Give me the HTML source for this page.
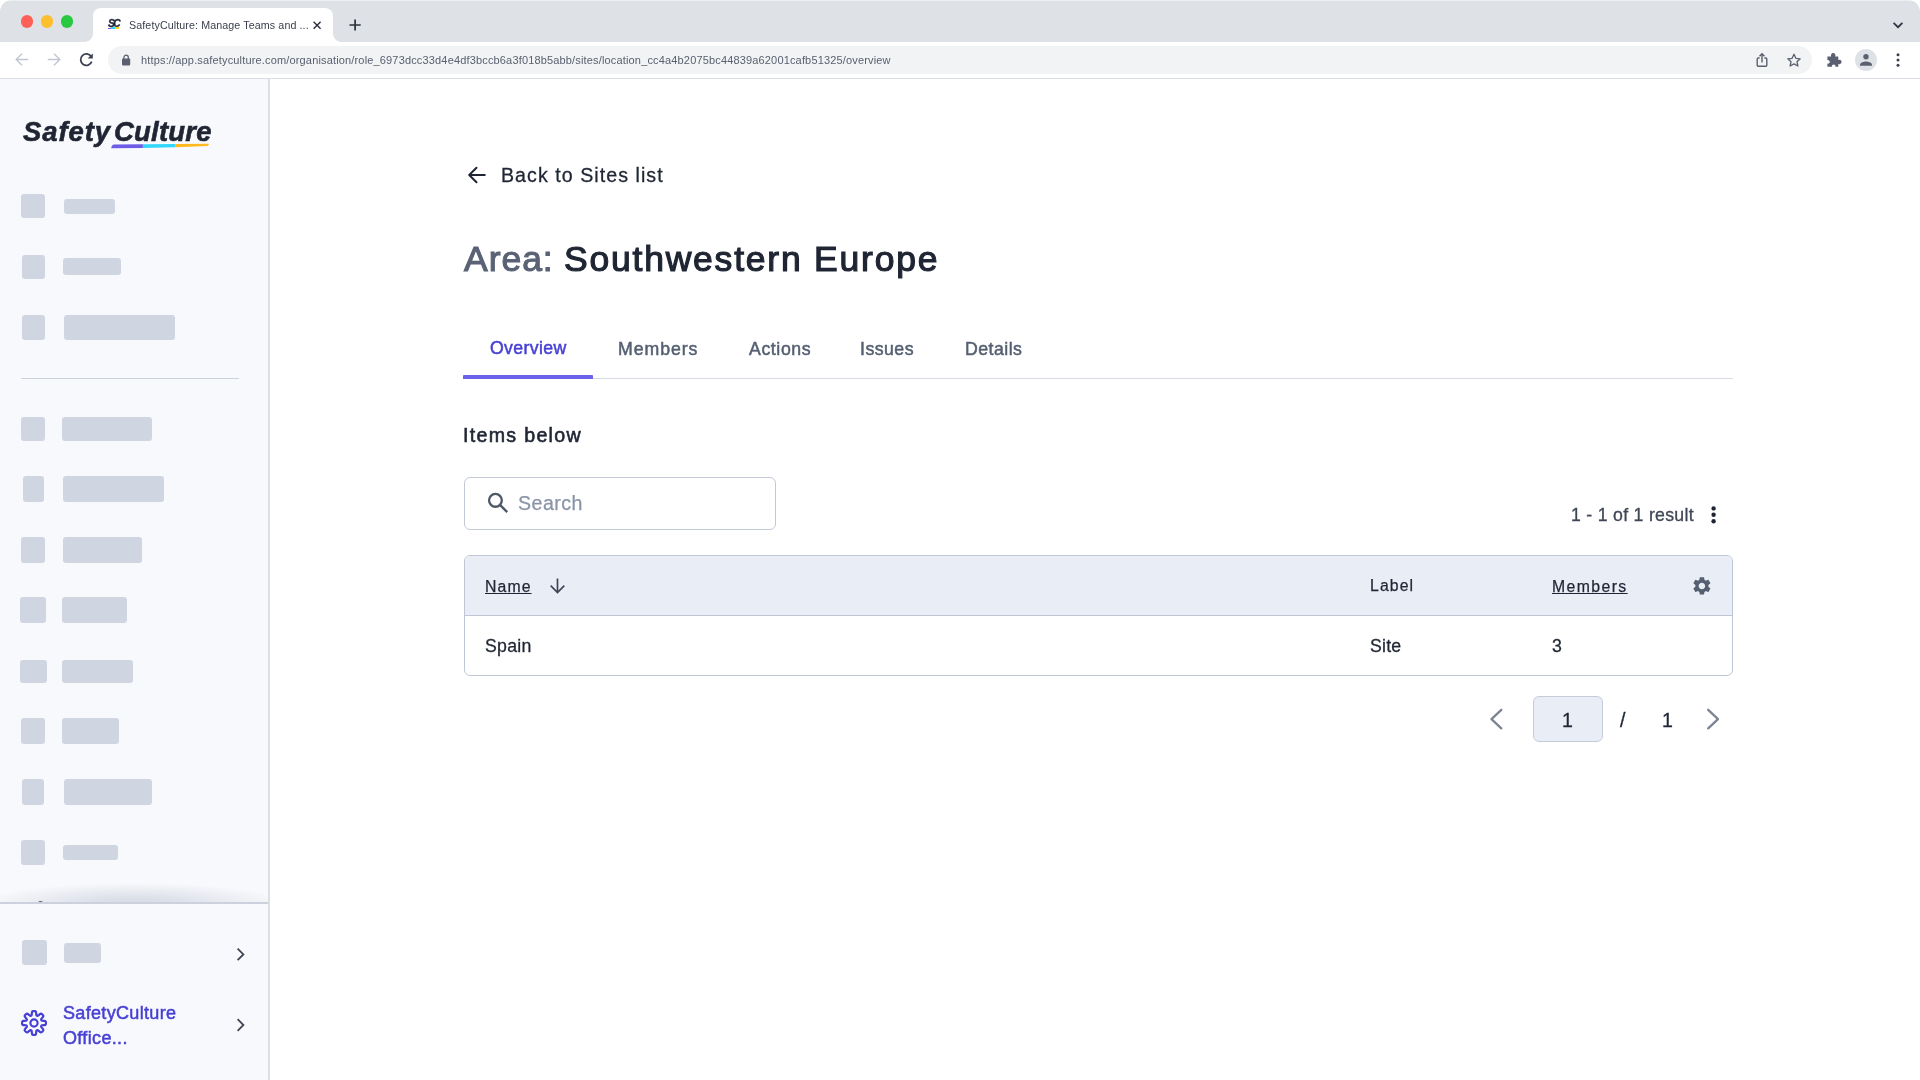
<!DOCTYPE html>
<html lang="en">
<head>
<meta charset="utf-8">
<title>SafetyCulture: Manage Teams and Sites</title>
<style>
*{box-sizing:border-box;margin:0;padding:0}
html,body{width:1920px;height:1080px;overflow:hidden;background:#fff}
body{position:relative;font-family:"Liberation Sans",sans-serif;color:#1f2533;-webkit-font-smoothing:antialiased}
.abs{position:absolute}
/* ---------- browser chrome ---------- */
#tabbar{position:absolute;left:0;top:0;width:1920px;height:42px;background:#dee1e6}
#tab{position:absolute;left:93px;top:8px;width:240px;height:34px;background:#fff;border-radius:8px 8px 0 0}
#tab:before,#tab:after{content:"";position:absolute;bottom:0;width:8px;height:8px;background:radial-gradient(circle at 0 0,rgba(255,255,255,0) 7.5px,#fff 8px)}
#tab:before{left:-8px}
#tab:after{right:-8px;background:radial-gradient(circle at 100% 0,rgba(255,255,255,0) 7.5px,#fff 8px)}
.tl{position:absolute;top:15.3px;width:12.4px;height:12.4px;border-radius:50%}
#tabtitle{position:absolute;left:128.8px;top:19.7px;font-size:10.7px;line-height:11px;color:#3a3f4d;white-space:nowrap;letter-spacing:0.1px;will-change:transform}
#toolbar{position:absolute;left:0;top:42px;width:1920px;height:36px;background:#fff}
#omni{position:absolute;left:108px;top:46px;width:1704px;height:28px;border-radius:14px;background:#f1f3f4}
#url{position:absolute;left:140.6px;top:54.8px;font-size:11px;line-height:11px;color:#5a6070;white-space:nowrap;letter-spacing:0.16px;will-change:transform}
#chromeline{position:absolute;left:0;top:78px;width:1920px;height:1px;background:#d9dce5}
/* ---------- sidebar ---------- */
#side{position:absolute;left:0;top:79px;width:270px;height:1001px;background:#f8f9fc;border-right:2px solid #dcdfe6}
.sk{position:absolute;background:#cfd6e2;border-radius:3px}
/* ---------- main ---------- */
#main{position:absolute;left:270px;top:79px;width:1650px;height:1001px;background:#fff}
.t{position:absolute;white-space:nowrap;line-height:1;will-change:transform}
</style>
</head>
<body>
<!-- ================= browser chrome ================= -->
<div id="tabbar"></div>
<div class="tl" style="left:20.800px;background:#fe5f57"></div>
<div class="tl" style="left:40.700px;background:#fdbf2d"></div>
<div class="tl" style="left:60.700px;background:#28c840"></div>
<div id="tab"></div>
<!-- favicon -->
<div class="t" id="fav" style="left:107.7px;top:18.7px;font-size:10.3px;font-weight:bold;font-style:italic;color:#1f2533;letter-spacing:-1.7px;-webkit-text-stroke:0.3px #1f2533">SC</div>
<div class="abs" style="left:108px;top:27.600px;width:3.200px;height:1.500px;background:#6c5ce7"></div>
<div class="abs" style="left:111.200px;top:27.200px;width:3.800px;height:1.900px;background:#33d6fc"></div>
<div class="abs" style="left:115px;top:27.200px;width:3.800px;height:1.700px;background:#ffd21e"></div>
<div id="tabtitle">SafetyCulture: Manage Teams and ...</div>
<svg class="abs" style="left:0;top:0" width="1920" height="79" viewBox="0 0 1920 79" fill="none">
  <!-- tab close -->
  <path d="M313.6 21.8 L320.6 28.8 M320.6 21.8 L313.6 28.8" stroke="#2b2f3a" stroke-width="1.4"/>
  <!-- new tab plus -->
  <path d="M349.5 25 H360.7 M355.1 19.4 V30.6" stroke="#2b2f3a" stroke-width="1.7"/>
  <!-- tab search chevron -->
  <path d="M1893.6 22.8 L1898 27.2 L1902.4 22.8" stroke="#2f3340" stroke-width="1.7"/>
</svg>
<div id="toolbar"></div>
<div id="omni"></div>
<div id="url">https://app.safetyculture.com/organisation/role_6973dcc33d4e4df3bccb6a3f018b5abb/sites/location_cc4a4b2075bc44839a62001cafb51325/overview</div>
<svg class="abs" style="left:0;top:42px" width="1920" height="36" viewBox="0 42 1920 36" fill="none">
  <!-- back / forward (disabled) -->
  <path d="M28.2 59.5 H16.6 M22 53.7 L16.2 59.5 L22 65.3" stroke="#c2c6d0" stroke-width="1.4"/>
  <path d="M47.8 59.5 H59.4 M54 53.7 L59.8 59.5 L54 65.3" stroke="#c2c6d0" stroke-width="1.4"/>
  <!-- reload -->
  <path d="M91.2 56.6 A5.7 5.7 0 1 0 91.7 61.6" stroke="#3c4150" stroke-width="1.8"/>
  <path d="M92.8 53.4 V58.6 H87.6 Z" fill="#3c4150"/>
  <!-- lock -->
  <rect x="122" y="58.6" width="8.2" height="6.8" rx="0.8" fill="#5a6070"/>
  <path d="M123.9 59 V57.4 A2.2 2.2 0 0 1 128.3 57.4 V59" stroke="#5a6070" stroke-width="1.3"/>
  <!-- share -->
  <path d="M1759.6 58 H1758.2 A1 1 0 0 0 1757.2 59 V65.2 A1 1 0 0 0 1758.2 66.2 H1765.8 A1 1 0 0 0 1766.8 65.2 V59 A1 1 0 0 0 1765.8 58 H1764.4" stroke="#5a6070" stroke-width="1.4"/>
  <path d="M1762 62.6 V54 M1759.5 56.2 L1762 53.7 L1764.5 56.2" stroke="#5a6070" stroke-width="1.4"/>
  <!-- star -->
  <path d="M1794 54.3 L1795.9 58.3 L1800.2 58.8 L1797 61.8 L1797.9 66 L1794 63.9 L1790.100 66 L1791 61.8 L1787.8 58.8 L1792.100 58.3 Z" stroke="#5a6070" stroke-width="1.3" stroke-linejoin="round"/>
  <!-- extensions puzzle -->
  <path d="M1827.400 56.400 H1831.200 A2.250 2.250 0 1 1 1835.200 56.400 H1838.300 V59.900 A2.250 2.250 0 1 1 1838.300 63.900 V66.800 H1835.400 A1.800 1.800 0 1 0 1832 66.800 H1827.400 V63.600 A1.800 1.800 0 1 0 1827.400 60.200 Z" fill="#5a6070"/>
  <!-- profile -->
  <circle cx="1866" cy="60" r="11" fill="#dee1e6"/>
  <circle cx="1866" cy="56.700" r="2.700" fill="#5a6070"/>
  <path d="M1860 65.800 V64.700 C1860 62.600 1864 61.500 1866 61.500 C1868 61.500 1872 62.600 1872 64.700 V65.800 Z" fill="#5a6070"/>
  <!-- menu dots -->
  <circle cx="1898" cy="54.800" r="1.500" fill="#3c4150"/><circle cx="1898" cy="60" r="1.500" fill="#3c4150"/><circle cx="1898" cy="65.200" r="1.500" fill="#3c4150"/>
</svg>
<div id="chromeline"></div>
<!-- window rounded corners -->
<div class="abs" style="left:0;top:0;width:1920px;height:1px;background:#eceef2"></div>
<div class="abs" style="left:0;top:0;width:12px;height:12px;background:radial-gradient(circle at 100% 100%,rgba(255,255,255,0) 11.500px,#fff 12.500px)"></div>
<div class="abs" style="left:1908px;top:0;width:12px;height:12px;background:radial-gradient(circle at 0 100%,rgba(255,255,255,0) 11.500px,#fff 12.500px)"></div>

<!-- ================= sidebar ================= -->
<div id="side"></div>

<!-- logo -->
<div class="t" id="logo1" style="left:22.8px;top:117.600px;font-size:27.500px;font-weight:bold;font-style:italic;color:#1f2533;letter-spacing:0.9px;-webkit-text-stroke:0.6px #1f2533">Safety</div>
<div class="t" id="logo2" style="left:113.6px;top:117.600px;font-size:27.500px;font-weight:bold;font-style:italic;color:#1f2533;letter-spacing:0.2px;-webkit-text-stroke:0.6px #1f2533">Culture</div>
<svg class="abs" style="left:108px;top:142px" width="106" height="8" viewBox="108 142 106 8">
  <path d="M113.500 144.400 L143 144.200 L142.800 147.900 L111.200 148.300 Q111.400 145 113.500 144.400Z" fill="#6c5ce7"/>
  <path d="M143 144.200 L175.300 144 L175 147.300 L142.800 147.900Z" fill="#33d6fc"/>
  <path d="M175.300 144 L209 143.800 Q208.700 145.600 207.500 146 L175 147.300Z" fill="#ffb81e"/>
</svg>
<div class="abs" style="left:21px;top:378px;width:218px;height:1px;background:#cdd3de"></div>
<div class="sk" style="left:21px;top:194px;width:24px;height:24px"></div><div class="sk" style="left:64px;top:199px;width:51px;height:15px"></div>
<div class="sk" style="left:22px;top:255px;width:23px;height:24px"></div><div class="sk" style="left:63px;top:258px;width:58px;height:17px"></div>
<div class="sk" style="left:22px;top:315px;width:23px;height:25px"></div><div class="sk" style="left:64px;top:315px;width:111px;height:25px"></div>
<div class="sk" style="left:21px;top:417px;width:24px;height:24px"></div><div class="sk" style="left:62px;top:417px;width:90px;height:24px"></div>
<div class="sk" style="left:23px;top:476px;width:21px;height:26px"></div><div class="sk" style="left:63px;top:476px;width:101px;height:26px"></div>
<div class="sk" style="left:21px;top:537px;width:24px;height:26px"></div><div class="sk" style="left:63px;top:537px;width:79px;height:26px"></div>
<div class="sk" style="left:20px;top:597px;width:26px;height:26px"></div><div class="sk" style="left:62px;top:597px;width:65px;height:26px"></div>
<div class="sk" style="left:20px;top:660px;width:27px;height:23px"></div><div class="sk" style="left:62px;top:660px;width:71px;height:23px"></div>
<div class="sk" style="left:21px;top:718px;width:24px;height:26px"></div><div class="sk" style="left:62px;top:718px;width:57px;height:26px"></div>
<div class="sk" style="left:22px;top:779px;width:22px;height:26px"></div><div class="sk" style="left:64px;top:779px;width:88px;height:26px"></div>
<div class="sk" style="left:21px;top:840px;width:24px;height:25px"></div><div class="sk" style="left:63px;top:845px;width:55px;height:15px"></div>
<div class="sk" style="left:22px;top:940px;width:25px;height:25px"></div><div class="sk" style="left:64px;top:943px;width:37px;height:20px"></div>
<!-- scroll shadow + separator -->
<div class="abs" style="left:0;top:882px;width:268px;height:20.600px;background:radial-gradient(ellipse 150px 20px at 50% 100%,rgba(205,210,222,0.780) 0%,rgba(205,210,222,0.620) 30%,rgba(205,210,222,0.380) 57%,rgba(205,210,222,0.140) 85%,rgba(205,210,222,0) 100%)"></div>
<div class="abs" style="left:38px;top:900.900px;width:4.500px;height:2px;border-radius:2.500px 2.500px 0 0;background:#63666f"></div>
<div class="abs" style="left:0;top:902.400px;width:268px;height:1.300px;background:#ccd1dd"></div>
<svg class="abs" style="left:0;top:930px" width="268" height="150" viewBox="0 930 268 150" fill="none">
  <path d="M237.600 948.600 L243.400 954.400 L237.600 960.200" stroke="#3f4554" stroke-width="1.800"/>
  <path d="M237.600 1019.200 L243.400 1025 L237.600 1030.800" stroke="#3f4554" stroke-width="1.800"/>
  <g transform="translate(34 1023)" stroke="#4740d4" stroke-width="2.200" stroke-linejoin="round">
    <path d="M0.00 -11.95 L0.39 -11.94 L0.78 -11.90 L1.16 -11.82 L1.53 -11.65 L1.86 -11.28 L2.09 -10.51 L2.19 -9.41 L2.26 -8.43 L2.38 -7.85 L2.56 -7.55 L2.77 -7.37 L3.00 -7.25 L3.25 -7.17 L3.53 -7.15 L3.87 -7.24 L4.36 -7.56 L5.10 -8.20 L5.95 -8.91 L6.66 -9.29 L7.15 -9.32 L7.54 -9.18 L7.86 -8.97 L8.17 -8.72 L8.45 -8.45 L8.72 -8.17 L8.97 -7.86 L9.18 -7.54 L9.32 -7.15 L9.29 -6.66 L8.91 -5.95 L8.20 -5.10 L7.56 -4.36 L7.24 -3.87 L7.15 -3.53 L7.17 -3.25 L7.25 -3.00 L7.37 -2.77 L7.55 -2.56 L7.85 -2.38 L8.43 -2.26 L9.41 -2.19 L10.51 -2.09 L11.28 -1.86 L11.65 -1.53 L11.82 -1.16 L11.90 -0.78 L11.94 -0.39 L11.95 -0.00 L11.94 0.39 L11.90 0.78 L11.82 1.16 L11.65 1.53 L11.28 1.86 L10.51 2.09 L9.41 2.19 L8.43 2.26 L7.85 2.38 L7.55 2.56 L7.37 2.77 L7.25 3.00 L7.17 3.25 L7.15 3.53 L7.24 3.87 L7.56 4.36 L8.20 5.10 L8.91 5.95 L9.29 6.66 L9.32 7.15 L9.18 7.54 L8.97 7.86 L8.72 8.17 L8.45 8.45 L8.17 8.72 L7.86 8.97 L7.54 9.18 L7.15 9.32 L6.66 9.29 L5.95 8.91 L5.10 8.20 L4.36 7.56 L3.87 7.24 L3.53 7.15 L3.25 7.17 L3.00 7.25 L2.77 7.37 L2.56 7.55 L2.38 7.85 L2.26 8.43 L2.19 9.41 L2.09 10.51 L1.86 11.28 L1.53 11.65 L1.16 11.82 L0.78 11.90 L0.39 11.94 L0.00 11.95 L-0.39 11.94 L-0.78 11.90 L-1.16 11.82 L-1.53 11.65 L-1.86 11.28 L-2.09 10.51 L-2.19 9.41 L-2.26 8.43 L-2.38 7.85 L-2.56 7.55 L-2.77 7.37 L-3.00 7.25 L-3.25 7.17 L-3.53 7.15 L-3.87 7.24 L-4.36 7.56 L-5.10 8.20 L-5.95 8.91 L-6.66 9.29 L-7.15 9.32 L-7.54 9.18 L-7.86 8.97 L-8.17 8.72 L-8.45 8.45 L-8.72 8.17 L-8.97 7.86 L-9.18 7.54 L-9.32 7.15 L-9.29 6.66 L-8.91 5.95 L-8.20 5.10 L-7.56 4.36 L-7.24 3.87 L-7.15 3.53 L-7.17 3.25 L-7.25 3.00 L-7.37 2.77 L-7.55 2.56 L-7.85 2.38 L-8.43 2.26 L-9.41 2.19 L-10.51 2.09 L-11.28 1.86 L-11.65 1.53 L-11.82 1.16 L-11.90 0.78 L-11.94 0.39 L-11.95 0.00 L-11.94 -0.39 L-11.90 -0.78 L-11.82 -1.16 L-11.65 -1.53 L-11.28 -1.86 L-10.51 -2.09 L-9.41 -2.19 L-8.43 -2.26 L-7.85 -2.38 L-7.55 -2.56 L-7.37 -2.77 L-7.25 -3.00 L-7.17 -3.25 L-7.15 -3.53 L-7.24 -3.87 L-7.56 -4.36 L-8.20 -5.10 L-8.91 -5.95 L-9.29 -6.66 L-9.32 -7.15 L-9.18 -7.54 L-8.97 -7.86 L-8.72 -8.17 L-8.45 -8.45 L-8.17 -8.72 L-7.86 -8.97 L-7.54 -9.18 L-7.15 -9.32 L-6.66 -9.29 L-5.95 -8.91 L-5.10 -8.20 L-4.36 -7.56 L-3.87 -7.24 L-3.53 -7.15 L-3.25 -7.17 L-3.00 -7.25 L-2.77 -7.37 L-2.56 -7.55 L-2.38 -7.85 L-2.26 -8.43 L-2.19 -9.41 L-2.09 -10.51 L-1.86 -11.28 L-1.53 -11.65 L-1.16 -11.82 L-0.78 -11.90 L-0.39 -11.94Z"/>
    <circle cx="0" cy="0" r="3.600"/>
  </g>
</svg>
<div class="t" id="sc1" style="left:63.10px;top:1003.80px;font-size:18px;color:#4740d4;-webkit-text-stroke:0.5px #4740d4;letter-spacing:0.33px">SafetyCulture</div>
<div class="t" id="sc2" style="left:63.10px;top:1028.80px;font-size:18px;color:#4740d4;-webkit-text-stroke:0.5px #4740d4;letter-spacing:0.34px">Office...</div>


<!-- ================= main ================= -->
<div id="main"></div>

<!-- back link -->
<svg class="abs" style="left:460px;top:160px" width="40" height="30" viewBox="460 160 40 30" fill="none">
  <path d="M484.800 175 H469.600 M476.500 167.700 L469.200 175 L476.500 182.300" stroke="#1f2533" stroke-width="2" stroke-linecap="round" stroke-linejoin="round"/>
</svg>
<div class="t" id="back" style="left:500.90px;top:165.7px;font-size:19.6px;color:#1f2533;letter-spacing:1.05px;-webkit-text-stroke:0.3px #1f2533">Back to Sites list</div>
<!-- title -->
<div class="t" id="area" style="left:464.10px;top:241.9px;font-size:35.5px;color:#5a6275;-webkit-text-stroke:1.1px #5a6275;letter-spacing:0.97px">Area:</div><div class="t" id="title" style="left:563.70px;top:241.9px;font-size:35.5px;color:#1f2533;-webkit-text-stroke:1.2px #1f2533;letter-spacing:1.78px">Southwestern Europe</div>
<!-- tabs -->
<div class="t" id="tb1" style="left:489.60px;top:339.9px;font-size:17.7px;color:#4740d4;-webkit-text-stroke:0.5px #4740d4;letter-spacing:0.36px">Overview</div><div class="t" id="tb2" style="left:618.30px;top:341.2px;font-size:17.7px;color:#545f70;-webkit-text-stroke:0.5px #545f70;letter-spacing:0.95px">Members</div><div class="t" id="tb3" style="left:748.60px;top:341.2px;font-size:17.7px;color:#545f70;-webkit-text-stroke:0.5px #545f70;letter-spacing:0.60px">Actions</div><div class="t" id="tb4" style="left:859.80px;top:341.2px;font-size:17.7px;color:#545f70;-webkit-text-stroke:0.5px #545f70;letter-spacing:0.48px">Issues</div><div class="t" id="tb5" style="left:964.8px;top:341.2px;font-size:17.7px;color:#545f70;-webkit-text-stroke:0.5px #545f70;letter-spacing:0.48px">Details</div>
<div class="abs" style="left:463.400px;top:378px;width:1270px;height:1px;background:#d8dbe4"></div>
<div class="abs" style="left:463.400px;top:374.800px;width:129.500px;height:4.100px;background:#6a63e9;border-radius:1px 1px 0 0"></div>
<!-- items below -->
<div class="t" id="items" style="left:463.00px;top:425.8px;font-size:19.6px;color:#1f2533;-webkit-text-stroke:0.6px #1f2533;letter-spacing:1.31px">Items below</div>
<div class="abs" style="left:463.600px;top:477.150px;width:312.400px;height:52.450px;border:1px solid #c3c9d6;border-radius:6px;background:#fff"></div>
<svg class="abs" style="left:484px;top:490px" width="28" height="26" viewBox="484 490 28 26" fill="none">
  <circle cx="495.450" cy="500.350" r="6.400" stroke="#4f5867" stroke-width="2.300"/>
  <path d="M500 504.900 L507.200 512.100" stroke="#4f5867" stroke-width="2.400"/>
</svg>
<div class="t" id="search" style="left:517.90px;top:494.3px;font-size:19.6px;color:#8a94a6;letter-spacing:0.48px;-webkit-text-stroke:0.25px #8a94a6">Search</div><div class="t" id="res" style="left:1570.50px;top:506.70px;font-size:17.7px;color:#3f4655;letter-spacing:0.29px;-webkit-text-stroke:0.3px #3f4655">1 - 1 of 1 result</div>
<svg class="abs" style="left:1706px;top:503px" width="16" height="24" viewBox="1706 503 16 24"><circle cx="1713.600" cy="508.400" r="2.200" fill="#1f2533"/><circle cx="1713.600" cy="514.800" r="2.200" fill="#1f2533"/><circle cx="1713.600" cy="521.200" r="2.200" fill="#1f2533"/></svg>
<!-- table -->
<div class="abs" style="left:463.600px;top:554.800px;width:1269.900px;height:121px;border:1px solid #bfc6d4;border-radius:6px;background:#fff;overflow:hidden"><div style="height:60.500px;background:#e9edf6;border-bottom:1px solid #bfc6d4"></div></div>
<div class="t" id="thn" style="left:484.8px;top:578.60px;font-size:15.8px;color:#1f2533;text-decoration:underline;text-underline-offset:1.2px;text-decoration-thickness:1.3px;letter-spacing:1.10px;-webkit-text-stroke:0.25px #1f2533">Name</div>
<svg class="abs" style="left:548px;top:576px" width="20" height="20" viewBox="548 576 20 20" fill="none"><path d="M557.500 578.400 V592 M550.700 585.700 L557.500 592.500 L564.300 585.700" stroke="#3f4655" stroke-width="1.700"/></svg>
<div class="t" id="thl" style="left:1369.7px;top:578.40px;font-size:15.8px;color:#1f2533;letter-spacing:1.12px;-webkit-text-stroke:0.25px #1f2533">Label</div><div class="t" id="thm" style="left:1552.10px;top:578.60px;font-size:15.8px;color:#1f2533;text-decoration:underline;text-underline-offset:1.2px;text-decoration-thickness:1.3px;letter-spacing:1.40px;-webkit-text-stroke:0.25px #1f2533">Members</div>
<svg class="abs" style="left:1691.100px;top:575px" width="21.800" height="21.800" viewBox="0 0 24 24"><path fill="#545f70" d="M19.140 12.940c.040-.300.060-.610.060-.940 0-.320-.020-.640-.070-.940l2.030-1.580c.180-.140.230-.410.120-.610l-1.920-3.320c-.120-.220-.370-.290-.590-.220l-2.390.960c-.500-.380-1.030-.700-1.620-.940l-.360-2.540c-.040-.240-.240-.410-.480-.410h-3.840c-.240 0-.430.170-.470.410l-.360 2.540c-.590.240-1.130.570-1.620.940l-2.390-.960c-.220-.080-.470 0-.590.220L2.740 8.870c-.120.210-.080.470.120.610l2.030 1.580c-.050.300-.090.630-.090.940s.020.640.070.940l-2.030 1.580c-.180.140-.230.410-.120.610l1.920 3.320c.120.220.370.290.590.220l2.390-.960c.500.380 1.030.700 1.620.940l.360 2.540c.050.240.240.410.480.410h3.840c.240 0 .440-.170.470-.410l.360-2.540c.590-.240 1.130-.560 1.620-.940l2.390.960c.220.080.470 0 .590-.220l1.920-3.320c.120-.220.070-.470-.120-.610l-2.010-1.580zM12 15.600c-1.980 0-3.600-1.620-3.600-3.600s1.620-3.600 3.600-3.600 3.600 1.620 3.600 3.600-1.620 3.600-3.600 3.600z"/></svg>
<div class="t" id="td1" style="left:484.8px;top:637.90px;font-size:17.7px;color:#1f2533;letter-spacing:0.28px;-webkit-text-stroke:0.3px #1f2533">Spain</div><div class="t" id="td2" style="left:1369.7px;top:637.90px;font-size:17.7px;color:#1f2533;letter-spacing:0.20px;-webkit-text-stroke:0.3px #1f2533">Site</div><div class="t" id="td3" style="left:1551.60px;top:637.90px;font-size:17.7px;color:#1f2533;-webkit-text-stroke:0.3px #1f2533">3</div>
<!-- pagination -->
<svg class="abs" style="left:1486px;top:705px" width="240" height="28" viewBox="1486 705 240 28" fill="none">
  <path d="M1501.300 709.800 L1491.500 719.100 L1501.300 728.400" stroke="#7d8494" stroke-width="2.300" stroke-linecap="round" stroke-linejoin="round"/>
  <path d="M1708.200 709.800 L1718 719.100 L1708.200 728.400" stroke="#7d8494" stroke-width="2.300" stroke-linecap="round" stroke-linejoin="round"/>
</svg>
<div class="abs" style="left:1533px;top:696px;width:70px;height:46px;border:1px solid #c5cbd8;border-radius:6px;background:#e9edf6"></div>
<div class="t" id="pg1" style="left:1562.00px;top:711.00px;font-size:19.6px;color:#1f2533;-webkit-text-stroke:0.3px #1f2533">1</div><div class="t" id="pg2" style="left:1620.20px;top:711.00px;font-size:19.6px;color:#1f2533;-webkit-text-stroke:0.3px #1f2533">/</div><div class="t" id="pg3" style="left:1661.85px;top:711.00px;font-size:19.6px;color:#1f2533;-webkit-text-stroke:0.3px #1f2533">1</div>
</body>
</html>
